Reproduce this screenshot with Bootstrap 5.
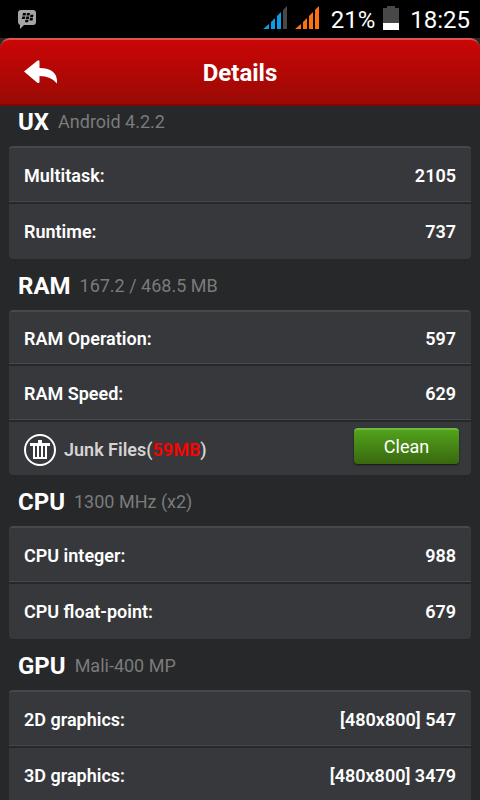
<!DOCTYPE html>
<html lang="en">
<head>
<meta charset="utf-8">
<meta name="viewport" content="width=device-width, initial-scale=1">
<title>Details</title>
<link href="https://cdn.jsdelivr.net/npm/bootstrap@5.3.0/dist/css/bootstrap.min.css" rel="stylesheet">
<style>
body { background: #27282a; color: #fff; font-family: Roboto, "Noto Sans", sans-serif; font-size: 18px; line-height: 24px; }
.status-bar { height: 38px; background: #000; font-size: 24px; padding: 0 10px 2px 18px; }
.status-text { padding-top: 4px; }
.battery { margin: 0 11px 0 8px; }
.app-bar { height: 68px; padding: 0 24px; background: linear-gradient(#ca0606, #9a0a05); border-top: 2px solid #dc5350; border-bottom: 2px solid #840603; border-radius: 10px 10px 0 0; }
.app-bar h1 { font-size: 24px; line-height: 32px; padding-top: 2px; }
.side-slot { width: 34px; }
.scroll-area { scrollbar-width: none; }
.scroll-area::-webkit-scrollbar { display: none; }
.section-head { padding: 11px 18px 9px; gap: 9px; line-height: 31px; }
.first-section .section-head { padding-top: 0; }
.section-head h2 { font-size: 24px; line-height: 29px; padding-top: 2px; }
.section-head span { color: #7b7b7b; }
.panel { margin: 0 9px; background: #37383b; border-top: 2px solid #47484b; border-radius: 4px; font-weight: 600; }
.metric { height: 55px; padding: 1px 15px 0; }
.metric:first-child { height: 56px; }
.metric:not(:last-child) { border-bottom: 2px solid #27282a; box-shadow: inset 0 -1px #47484b; }
.three .metric { height: 56px; padding-top: 2px; }
.three .metric:first-child { height: 54px; }
.three .metric:last-child { height: 53px; padding-right: 12px; }
.junk { color: #d3d3d3; gap: 8px; }
.junk-size { color: #f00; }
.btn-clean { width: 105px; height: 36px; padding: 0; margin-bottom: 8px; border: 0; border-top: 2px solid #70b83f; border-radius: 4px; color: #fff; font-size: 18px; line-height: 24px; background: linear-gradient(#52a21b, #396710); box-shadow: 0 1px 2px #161718; }
</style>
</head>
<body>
<div class="vh-100 d-flex flex-column overflow-hidden">
  <div class="status-bar d-flex align-items-center justify-content-between flex-shrink-0">
    <svg class="mt-1" width="18" height="20" viewBox="0 0 18 20" aria-hidden="true">
      <path fill="#a6a6a6" d="M3 0h12q3 0 3 3v9q0 3-3 3H6l-4 4v-4q-2-1-2-3V3q0-3 3-3z"/>
      <path fill="#000" d="M5 3h3l-.5 2.500h-3zM9 3h3l-.5 2.500h-3zM4.300 6.500h3L6.800 9h-3zM8.300 6.500h3l-.5 2.500h-3zM12.500 4.800h3l-.5 2.500h-3zM12 8h3l-.5 2.500h-3zM7.500 9.800h3L10 12.300H7z"/>
    </svg>
    <div class="d-flex align-items-center">
      <svg class="me-2" width="24" height="24" viewBox="0 0 24 24" aria-hidden="true">
        <path fill="#0b9ce5" d="M0 23l6-5v5zM8 23v-7l4-4v11zM14 23V10l4-4v17z"/><path fill="#484848" d="M20 23V4l4-4v23z"/>
      </svg>
      <svg width="24" height="24" viewBox="0 0 24 24" aria-hidden="true">
        <path fill="#ff710d" d="M0 23l6-5v5zM8 23v-7l4-4v11zM14 23V10l4-4v17zM20 23V4l4-4v23z"/>
      </svg>
      <span class="status-text ms-2 ps-1">21%</span>
      <svg class="battery" width="16" height="24" viewBox="0 0 16 24" aria-hidden="true">
        <path fill="#484848" d="M4 0h8v2h4v22H0V2h4z"/><path fill="#fff" d="M0 17h16v7H0z"/>
      </svg>
      <span class="status-text">18:25</span>
    </div>
  </div>
  <header class="app-bar d-flex align-items-center justify-content-between flex-shrink-0">
    <button class="btn p-0 border-0 side-slot d-flex" type="button" aria-label="Back">
      <svg width="34" height="24" viewBox="0 0 34 24" aria-hidden="true"><path fill="#fff" d="M0 11.500L13 1Q15.500-.8 15.500 2v6Q31.500 8 33 20v3.500Q27 16 15.500 16v5.500q0 2.500-2.500 1z"/></svg>
    </button>
    <h1 class="m-0 fw-bold">Details</h1>
    <div class="side-slot"></div>
  </header>
  <main class="scroll-area flex-grow-1 overflow-auto">
    <section class="first-section">
      <div class="section-head d-flex align-items-center"><h2 class="m-0 fw-bold">UX</h2><span>Android 4.2.2</span></div>
      <div class="panel">
        <div class="metric d-flex align-items-center justify-content-between"><span>Multitask:</span><span>2105</span></div>
        <div class="metric d-flex align-items-center justify-content-between"><span>Runtime:</span><span>737</span></div>
      </div>
    </section>
    <section>
      <div class="section-head d-flex align-items-center"><h2 class="m-0 fw-bold">RAM</h2><span>167.2 / 468.5 MB</span></div>
      <div class="panel three">
        <div class="metric d-flex align-items-center justify-content-between"><span>RAM Operation:</span><span>597</span></div>
        <div class="metric d-flex align-items-center justify-content-between"><span>RAM Speed:</span><span>629</span></div>
        <div class="metric d-flex align-items-center justify-content-between">
          <div class="junk d-flex align-items-center">
            <svg width="32" height="32" viewBox="0 0 32 32" aria-hidden="true">
              <circle cx="16" cy="16" r="15" fill="none" stroke="#fff" stroke-width="2"/>
              <path fill="#fff" d="M14 6h4v3h8v3h-3v13H9V12H6V9h8zM11 12v11h2V12zM15 12v11h2V12zM19 12v11h2V12z" fill-rule="evenodd"/>
            </svg>
            <span>Junk Files(<span class="junk-size">59MB</span>)</span>
          </div>
          <button class="btn btn-clean" type="button">Clean</button>
        </div>
      </div>
    </section>
    <section>
      <div class="section-head d-flex align-items-center"><h2 class="m-0 fw-bold">CPU</h2><span>1300 MHz (x2)</span></div>
      <div class="panel">
        <div class="metric d-flex align-items-center justify-content-between"><span>CPU integer:</span><span>988</span></div>
        <div class="metric d-flex align-items-center justify-content-between"><span>CPU float-point:</span><span>679</span></div>
      </div>
    </section>
    <section>
      <div class="section-head d-flex align-items-center"><h2 class="m-0 fw-bold">GPU</h2><span>Mali-400 MP</span></div>
      <div class="panel">
        <div class="metric d-flex align-items-center justify-content-between"><span>2D graphics:</span><span>[480x800] 547</span></div>
        <div class="metric d-flex align-items-center justify-content-between"><span>3D graphics:</span><span>[480x800] 3479</span></div>
      </div>
    </section>
  </main>
</div>
<script src="https://cdn.jsdelivr.net/npm/bootstrap@5.3.0/dist/js/bootstrap.bundle.min.js"></script>
</body>
</html>
